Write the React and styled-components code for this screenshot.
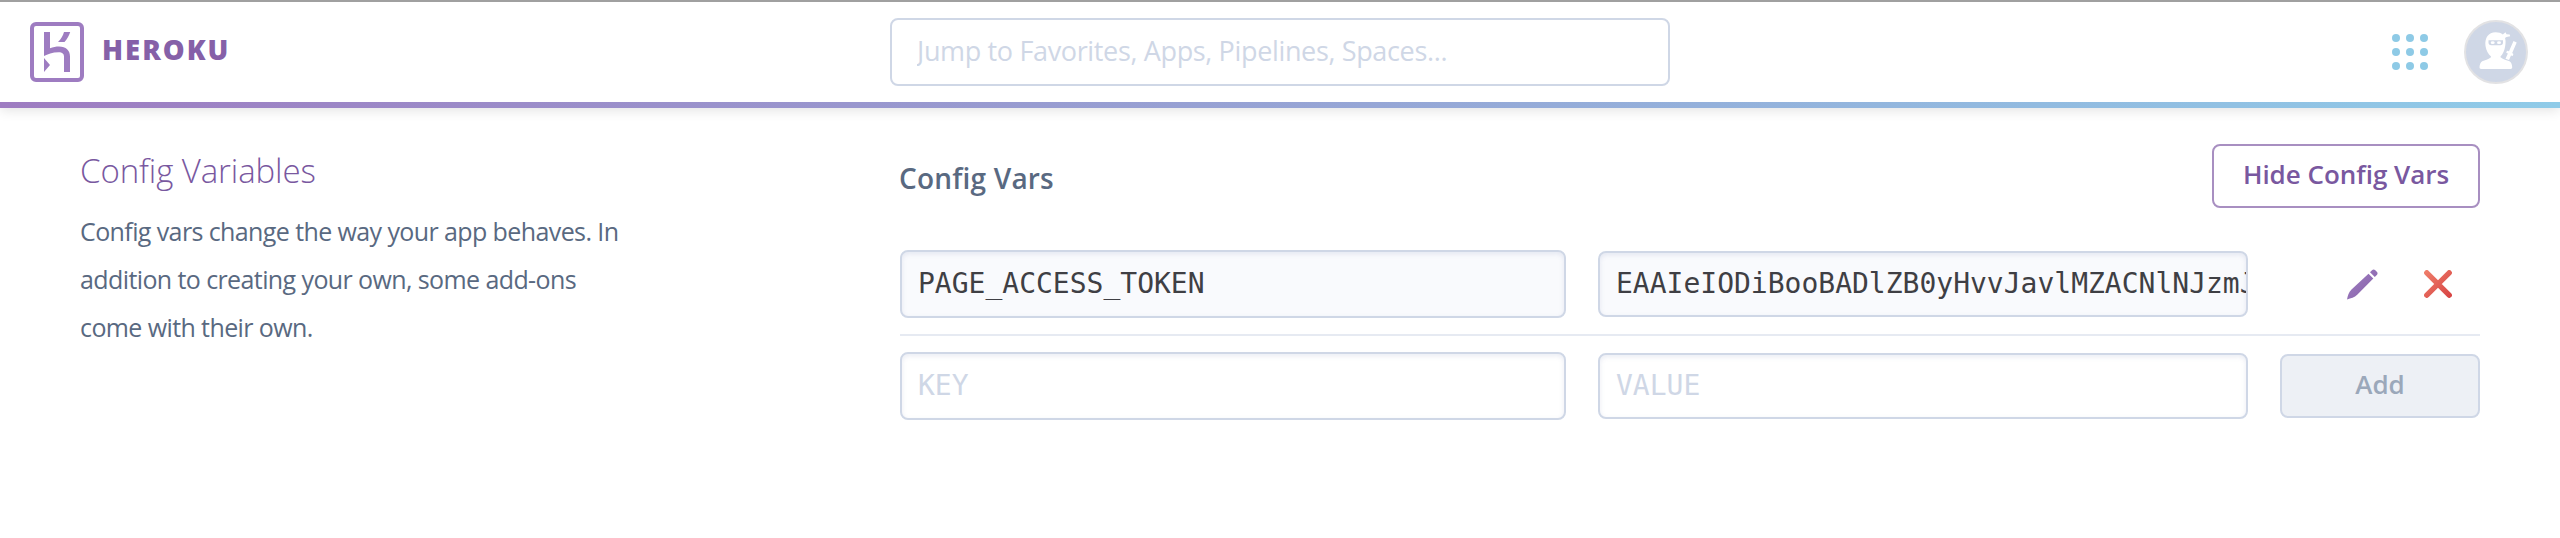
import React from "react";
import styled, { createGlobalStyle } from "styled-components";

const Global = createGlobalStyle`
  *, *::before, *::after { box-sizing: border-box; }
  body { margin: 0; background: #fff; font-family: "Open Sans", "Liberation Sans", sans-serif; }
  input, button { font: inherit; margin: 0; outline: none; }
`;

const Page = styled.div`
  height: 538px;
  overflow: hidden;
  background: #fff;
`;

const Header = styled.header`
  height: 108px;
  display: grid;
  grid-template-columns: 890px 780px 1fr;
  align-items: center;
  border-top: 2px solid #a0a0a0;
  border-bottom: 6px solid;
  border-image: linear-gradient(to right, #9e7cc1, #8fcbe8) 1;
  border-image-width: 0 0 6px 0;
  background: linear-gradient(#a0a0a0, #a0a0a0) top / 100% 2px no-repeat border-box, #fff;
  box-shadow: 0 2px 12px rgba(0, 0, 0, 0.12);
`;

const Brand = styled.a`
  display: flex;
  align-items: center;
  gap: 18px;
  padding-left: 30px;
  svg { display: block; }
`;

const BrandName = styled.span`
  padding-bottom: 4px;
  font-size: 27.5px;
  line-height: 40px;
  font-weight: 800;
  letter-spacing: 2px;
  color: #8560a8;
`;

const Search = styled.input`
  width: 780px;
  height: 68px;
  padding: 0 25px 4px;
  border: 2px solid #cfd7e6;
  border-radius: 8px;
  background: #fff;
  font-size: 27px;
  letter-spacing: -0.35px;
  font-weight: 400;
  &::placeholder { color: #cfd7e6; opacity: 1; }
`;

const HeaderActions = styled.div`
  display: flex;
  justify-content: flex-end;
  align-items: center;
  gap: 36px;
  padding-right: 32px;
  svg { display: block; }
`;

const Content = styled.main`
  display: grid;
  grid-template-columns: 820px 1580px;
  padding: 36px 80px 0;
`;

const Aside = styled.section`
  width: 560px;
`;

const Title = styled.h2`
  margin: 7px 0 0;
  font-size: 33px;
  line-height: 40px;
  font-weight: 320;
  letter-spacing: -0.1px;
  color: #79589f;
`;

const Description = styled.p`
  margin: 16px 0 0;
  font-size: 25px;
  line-height: 48px;
  letter-spacing: -0.6px;
  color: #596981;
  span { display: block; white-space: nowrap; }
`;

const PanelHead = styled.div`
  height: 64px;
  display: flex;
  justify-content: space-between;
  align-items: center;
`;

const PanelTitle = styled.h3`
  margin: 4px 0 0 -1px;
  font-size: 28px;
  line-height: 40px;
  font-weight: 600;
  letter-spacing: 0.2px;
  color: #596981;
`;

const Button = styled.button`
  width: ${(p) => p.$width}px;
  height: 64px;
  padding: 0 0 4px;
  border: 2px solid ${(p) => (p.$muted ? "#cfd7e6" : "#a88fc1")};
  border-radius: 8px;
  background: ${(p) => (p.$muted ? "#edf0f5" : "#fff")};
  color: ${(p) => (p.$muted ? "#9ba8ba" : "#79589f")};
  font-size: 26px;
  font-weight: 600;
  letter-spacing: -0.02px;
`;

const Rows = styled.div`
  margin-top: 42px;
`;

const Row = styled.div`
  display: grid;
  grid-template-columns: 666px 650px 200px;
  column-gap: 32px;
  align-items: center;
  & + & {
    margin-top: 16px;
    border-top: 2px solid #e6eaf2;
    padding-top: 16px;
  }
`;

const Field = styled.input`
  width: 100%;
  height: ${(p) => p.$height}px;
  padding: 0 0 1px 16px;
  border: 2px solid #cfd7e6;
  border-radius: 8px;
  background: ${(p) => (p.readOnly ? "#f9fafd" : "#fff")};
  box-shadow: inset 0 2px 5px rgba(89, 105, 160, 0.13);
  color: #3f3f44;
  && { font-family: "DejaVu Sans Mono", "Liberation Mono", monospace; }
  font-size: 28px;
  &::placeholder { color: #cfd7e6; opacity: 1; }
`;

const RowActions = styled.div`
  display: flex;
  justify-content: flex-end;
  align-items: center;
  gap: 46px;
  padding-right: 28px;
  svg { display: block; }
`;

const HerokuMark = () => (
  <svg width="54" height="60" viewBox="0 0 54 60" fill="#9e7cc1">
    <rect x="2" y="2" width="50" height="56" rx="4" fill="none" stroke="#9e7cc1" strokeWidth="4" />
    <path d="M14 10h6v16.200C23 25.200 26 24.600 29 24.600C36 24.600 40 28.500 40 34.500V50h-6V34.500C34 32 32.500 30.200 28.500 30.200C22.500 30.200 17.500 32.300 14 34Z" />
    <path d="M34 10h6.200C39 13.800 37.200 17 34.500 20H28C31 17.200 33 13.800 34 10Z" />
    <path d="M14 36l6 7-6 7Z" />
  </svg>
);

const AppGrid = () => (
  <svg width="36" height="36" viewBox="0 0 36 36" fill="#8ecae6">
    {[4, 18, 32].map((y) => [4, 18, 32].map((x) => <circle key={`${x}-${y}`} cx={x} cy={y} r="4" />))}
  </svg>
);

const NinjaAvatar = () => (
  <svg width="64" height="64" viewBox="0 0 64 64">
    <circle cx="32" cy="32" r="31" fill="#cfd7e6" stroke="#e2e2e4" strokeWidth="2" />
    <g fill="#fff">
      <path d="M31.500 12.300c3.200 0 5.500.8 7.300 2.200l2.700-2.300 1 2 3.200.2.500 1.800-3.700.8-1.500 1c.8 2.300.7 5 .2 8-.7 4.500-2.200 8-4.700 10.500v.8c3 2.600 6 2.600 9 4 1.800 1 2.700 3.500 2.700 6 0 1.200-.5 1.700-1.700 1.700H17.200c-1.200 0-1.700-.5-1.700-1.700 0-2.500 1-5 2.700-6 2.800-1.400 5.800-1.400 8.800-4v-.8c-2.800-2.500-4.800-6-5.500-10.500C20.500 18 24.500 12.300 31.500 12.300Z" />
      <path d="M49.500 21l3.200 1.600-4.500 10.300 1.200 1-.7 2-1.700-.5-2 4.600-3.500-1.200 2.400-5.200-1.700-.9.8-2 2 .6Z" />
    </g>
    <path d="M24.500 20.200h14.500v2.300c0 1.800-1 2.700-2.700 2.700h-9.100c-1.700 0-2.700-.9-2.700-2.700Z" fill="#cfd7e6" />
    <ellipse cx="28.700" cy="22.700" rx="2" ry="1.400" fill="#fff" />
    <ellipse cx="35" cy="22.700" rx="2" ry="1.400" fill="#fff" />
  </svg>
);

const PencilIcon = () => (
  <svg width="31" height="31" viewBox="0 0 31 31">
    <defs>
      <linearGradient id="pencil" x1="0" y1="0" x2="1" y2="1">
        <stop offset="0" stopColor="#a180c3" />
        <stop offset="1" stopColor="#8560a8" />
      </linearGradient>
    </defs>
    <path fill="url(#pencil)" d="M21.500 4.800L26.300 9.500L10.200 25.800C7.500 28.500 4 29.300 0 30.500C.8 26.800 1.500 23.500 4.500 20.600ZM23 3.300L25 1.300C26 .3 27.300.3 28.300 1.300L29.800 2.800C30.800 3.800 30.800 5 29.800 6L27.800 8Z" />
  </svg>
);

const RemoveIcon = () => (
  <svg width="28" height="28" viewBox="0 0 28 28">
    <defs>
      <linearGradient id="remove" gradientUnits="userSpaceOnUse" x1="0" y1="0" x2="28" y2="28">
        <stop offset="0" stopColor="#f0806c" />
        <stop offset="1" stopColor="#d64242" />
      </linearGradient>
    </defs>
    <path d="M2.800 2.800L25.200 25.200M25.200 2.800L2.800 25.200" stroke="url(#remove)" strokeWidth="5.400" strokeLinecap="round" fill="none" />
  </svg>
);

export default function App() {
  return (
    <Page>
      <Global />
      <Header>
        <Brand>
          <HerokuMark />
          <BrandName>HEROKU</BrandName>
        </Brand>
        <Search placeholder="Jump to Favorites, Apps, Pipelines, Spaces..." />
        <HeaderActions>
          <AppGrid />
          <NinjaAvatar />
        </HeaderActions>
      </Header>
      <Content>
        <Aside>
          <Title>Config Variables</Title>
          <Description>
            <span>Config vars change the way your app behaves. In</span>
            <span>addition to creating your own, some add-ons</span>
            <span>come with their own.</span>
          </Description>
        </Aside>
        <section>
          <PanelHead>
            <PanelTitle>Config Vars</PanelTitle>
            <Button $width={268}>Hide Config Vars</Button>
          </PanelHead>
          <Rows>
            <Row>
              <Field $height={68} readOnly value="PAGE_ACCESS_TOKEN" />
              <Field $height={66} readOnly value="EAAIeIODiBooBADlZB0yHvvJavlMZACNlNJzmJ" />
              <RowActions>
                <PencilIcon />
                <RemoveIcon />
              </RowActions>
            </Row>
            <Row>
              <Field $height={68} placeholder="KEY" />
              <Field $height={66} placeholder="VALUE" />
              <Button $width={200} $muted>Add</Button>
            </Row>
          </Rows>
        </section>
      </Content>
    </Page>
  );
}
